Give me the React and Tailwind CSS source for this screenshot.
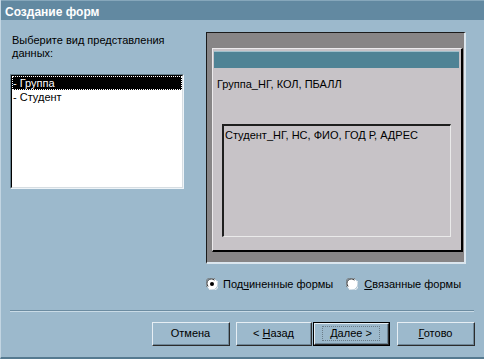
import React from "react";

function Radio({ checked }) {
  return (
    <svg width="12" height="12" viewBox="0 0 12 12" className="shrink-0">
      <circle cx="6" cy="6" r="5.5" fill="#ffffff" />
      <path d="M1.2 9.2 A5.3 5.3 0 0 1 9.2 1.2" fill="none" stroke="#7a7a7a" strokeWidth="1" />
      <path d="M2.2 8.4 A4.3 4.3 0 0 1 8.4 2.2" fill="none" stroke="#2a2a2a" strokeWidth="1" />
      <path d="M2.8 10.8 A5.3 5.3 0 0 0 10.8 2.8" fill="none" stroke="#f4f4f4" strokeWidth="1" />
      {checked && <circle cx="6" cy="6" r="2" fill="#000000" />}
    </svg>
  );
}

function Btn({ children, w, def, className = "" }) {
  return (
    <div
      className={`h-[24px] ${w} ${className} ${
        def ? "border border-black" : ""
      } box-border`}
    >
      <div className="w-full h-full border-t border-l border-t-[#e6eef4] border-l-[#e6eef4] border-b border-r border-b-[#2c2c2c] border-r-[#2c2c2c] box-border">
        <div className="w-full h-full border-b border-r border-b-[#6f8797] border-r-[#6f8797] box-border flex items-center justify-center">
          {def ? (
            <span className="px-[7px] outline outline-1 outline-dotted outline-[#6a7c88] leading-[13px]">
              {children}
            </span>
          ) : (
            <span className="leading-[13px]">{children}</span>
          )}
        </div>
      </div>
    </div>
  );
}

export default function App() {
  return (
    <div className="w-[484px] h-[359px] bg-[#9cb9cc] flex flex-col font-['Liberation_Sans',Arial,sans-serif] text-[11px] text-black overflow-hidden border-l border-l-[#c2d5e2] border-b-2 border-b-[#557a90] box-border">
      {/* Title bar */}
      <div className="h-[20px] shrink-0 bg-[#6289a1] border-t border-t-[#86a7bb] pl-[4px] pt-[3px] text-white font-bold text-[12px] leading-[16px]">
        Создание форм
      </div>

      {/* Content */}
      <div className="flex h-[270px] shrink-0">
        {/* Left column */}
        <div className="pl-[9px] pt-[14px] w-[183px] shrink-0 flex flex-col">
          <div className="pl-[2px] leading-[13px]">
            Выберите вид представления
            <br />
            данных:
          </div>
          <div className="mt-[14px] w-[174px] h-[115px] border-t border-l border-t-[#65808f] border-l-[#65808f] border-b border-r border-b-[#eef4f8] border-r-[#eef4f8] box-border">
            <div className="w-full h-full bg-white border-t border-l border-t-black border-l-black border-b border-r border-b-[#d6dde2] border-r-[#d6dde2] box-border">
              <div className="bg-black text-white h-[14px] leading-[14px] pl-[1px] outline outline-1 outline-dotted outline-white -outline-offset-1">
                - Группа
              </div>
              <div className="h-[14px] leading-[14px] pl-[1px]">- Студент</div>
            </div>
          </div>
        </div>

        {/* Right column */}
        <div className="ml-[22px] pt-[12px] flex flex-col">
          <div className="w-[260px] h-[236px] bg-[#878586] border-t border-l border-t-[#1a1a1a] border-l-[#1a1a1a] border-b-2 border-r-2 border-b-[#dbe6ee] border-r-[#dbe6ee] box-border pt-[15px] pl-[5px]">
            <div className="w-[251px] h-[204px] bg-[#c7c3c7] border-t border-l border-t-[#eceaec] border-l-[#eceaec] border-b-2 border-r-2 border-b-black border-r-black box-border pt-[2px] pl-[1px]">
              <div className="w-[245px] h-[17px] bg-[#4f8395] border-t border-t-[#9fc0cb]" />
              <div className="mt-[9px] pl-[3px] leading-[14px]">Группа_НГ, КОЛ, ПБАЛЛ</div>
              <div className="mt-[33px] ml-[8px] w-[229px] h-[113px] border-t-2 border-l-2 border-t-[#1e1e1e] border-l-[#1e1e1e] border-b border-r border-b-[#eaeaea] border-r-[#eaeaea] box-border pl-[1px] pt-[2px] leading-[14px]">
                Студент_НГ, НС, ФИО, ГОД Р, АДРЕС
              </div>
            </div>
          </div>

          <div className="mt-[14px] flex items-center h-[12px]">
            <Radio checked />
            <span className="ml-[5px] leading-[14px]">
              Под<span className="underline">ч</span>иненные формы
            </span>
            <span className="ml-[13px] flex items-center">
              <Radio />
              <span className="ml-[6px] leading-[14px]">
                <span className="underline">С</span>вязанные формы
              </span>
            </span>
          </div>
        </div>
      </div>

      {/* Separator */}
      <div className="mt-[20px] ml-[9px] w-[464px] h-[2px] border-t border-t-[#6c8ca1] border-b border-b-[#c9dbe6] box-border" />

      {/* Buttons */}
      <div className="mt-[10px] flex pl-[151px]">
        <Btn w="w-[78px]">Отмена</Btn>
        <Btn w="w-[76px]" className="ml-[6px]">
          &lt; <span className="underline">Н</span>азад
        </Btn>
        <Btn w="w-[77px]" className="ml-[1px]" def>
          <span className="underline">Д</span>алее &gt;
        </Btn>
        <Btn w="w-[78px]" className="ml-[7px]">
          <span className="underline">Г</span>отово
        </Btn>
      </div>
    </div>
  );
}
